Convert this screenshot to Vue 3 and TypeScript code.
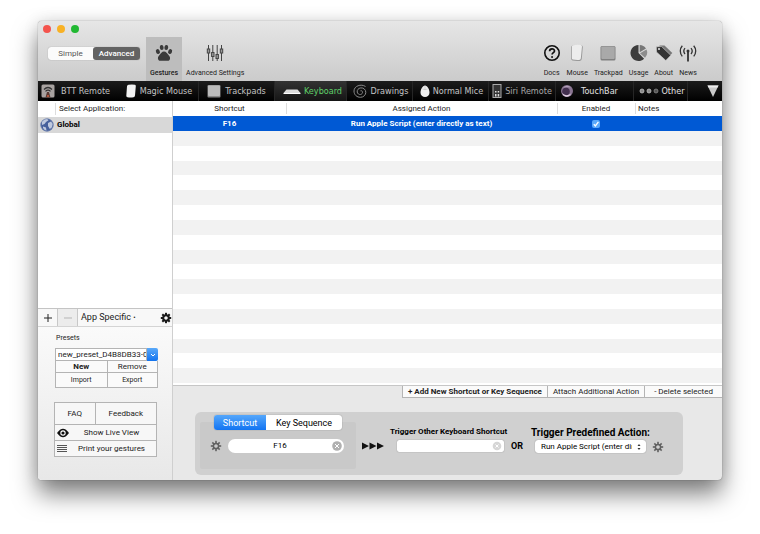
<script setup lang="ts">
import { ref } from 'vue'

interface Item {
  id: string
  label: string
}

const tools: Item[] = [
  { id: 'docs', label: 'Docs' },
  { id: 'mouse', label: 'Mouse' },
  { id: 'trackpad', label: 'Trackpad' },
  { id: 'usage', label: 'Usage' },
  { id: 'about', label: 'About' },
  { id: 'news', label: 'News' },
]

const tabs: Item[] = [
  { id: 'remote', label: 'BTT Remote' },
  { id: 'magic', label: 'Magic Mouse' },
  { id: 'trackpads', label: 'Trackpads' },
  { id: 'keyboard', label: 'Keyboard' },
  { id: 'drawings', label: 'Drawings' },
  { id: 'mice', label: 'Normal Mice' },
  { id: 'siri', label: 'Siri Remote' },
  { id: 'touchbar', label: 'TouchBar' },
  { id: 'other', label: 'Other' },
]

const activeTab = ref('keyboard')
const enabled = ref(true)
const preset = ref('new_preset_D4B8DB33-0A41')
const shortcut = ref('F16')
const otherShortcut = ref('')
const emptyRows = 17
const teeth = [0, 45, 90, 135, 180, 225, 270, 315]
</script>

<template>
  <div class="page">
    <main class="window">
      <header class="toolbar">
        <div class="lights">
          <button class="light red" aria-label="Close"></button>
          <button class="light amber" aria-label="Minimize"></button>
          <button class="light green" aria-label="Zoom"></button>
        </div>
        <div class="tools">
          <div class="mode">
            <button class="simple">Simple</button>
            <button class="advanced">Advanced</button>
          </div>
          <button class="tool wide chosen">
            <svg class="glyph" viewBox="0 0 18 18" fill="#3a3a3a">
              <ellipse cx="2.9" cy="7.6" rx="1.9" ry="2.5" transform="rotate(-25 2.9 7.6)" />
              <ellipse cx="6.7" cy="3.5" rx="1.9" ry="2.6" transform="rotate(-8 6.7 3.5)" />
              <ellipse cx="11.3" cy="3.5" rx="1.9" ry="2.6" transform="rotate(8 11.3 3.5)" />
              <ellipse cx="15.1" cy="7.6" rx="1.9" ry="2.5" transform="rotate(25 15.1 7.6)" />
              <path d="M9 7.6c2.2 0 3.1 2 4.5 3.5 1.600 1.700 1.900 3 1.300 4.300-.8 1.700-2.700 1.600-5.800 1.300-3.100.3-5 .4-5.800-1.300-.6-1.300-.3-2.600 1.300-4.300C5.900 9.600 6.800 7.600 9 7.600z" />
            </svg>
            <span>Gestures</span>
          </button>
          <button class="tool wide">
            <svg class="glyph" viewBox="0 0 18 18" fill="none" stroke="#444" stroke-width="1">
              <path d="M2.500 1v16M6.800 1v16M11.200 1v16M15.500 1v16" />
              <g fill="#999">
                <rect x="1.300" y="5" width="2.400" height="4" />
                <rect x="5.600" y="8.500" width="2.400" height="4" />
                <rect x="10" y="10.500" width="2.400" height="4" />
                <rect x="14.300" y="5" width="2.400" height="4" />
              </g>
            </svg>
            <span>Advanced Settings</span>
          </button>
          <nav class="right-tools" aria-label="Tools">
            <button v-for="t in tools" :key="t.id" class="tool">
              <svg v-if="t.id === 'docs'" class="glyph" viewBox="0 0 18 18" fill="none" stroke="#111">
                <circle cx="9" cy="9" r="7.200" stroke-width="1.600" />
                <path d="M6.600 7.200c0-3.200 4.900-3.100 4.900-.3 0 1.800-2.400 1.800-2.400 3.700" stroke-width="1.700" />
                <circle cx="9.100" cy="13" r=".6" fill="#111" />
              </svg>
              <svg v-else-if="t.id === 'mouse'" class="glyph" viewBox="0 0 18 18">
                <path d="M4.500 1.500q5-1 9-.3 1.400.3 1.300 2l-1 11.500q-.2 2-2 2.200-4 .4-7.300-.3-1.500-.4-1.300-2L3.300 3Q3.400 1.700 4.500 1.500z" fill="#999" />
                <path d="M4.800 1.200q4-.8 8-.2 1.300.3 1.200 1.600l-1.200 11.800q-.2 1.300-1.700 1.500-3.300.2-6.300-.4-1-.2-.9-1.500L4 2.500q0-1.100.8-1.300z" fill="#ededed" />
              </svg>
              <svg v-else-if="t.id === 'trackpad'" class="glyph" viewBox="0 0 18 18">
                <rect x="1.500" y="2" width="15" height="14.500" rx="1.500" fill="#808080" />
                <rect x="2.300" y="2.500" width="13.400" height="12.500" rx="1" fill="#a9a9a9" />
              </svg>
              <svg v-else-if="t.id === 'usage'" class="glyph" viewBox="0 0 18 18">
                <path d="M8.500 9V1a8 8 0 1 0 5.600 13.700z" fill="#3d3d3d" />
                <path d="M9.700 8.300V1a7.500 7.500 0 0 1 6.300 3.500z" fill="#777" />
                <path d="M10 9.200l6.500-3.700a7.500 7.500 0 0 1-1.500 8.300z" fill="#8d8d8d" />
              </svg>
              <svg v-else-if="t.id === 'about'" class="glyph" viewBox="0 0 18 18">
                <path d="M4.500 1.500h5L17.300 9l-4.700 5-8-7.500z" fill="#777" />
                <path d="M1.300 2.800l5.300-.3 9.200 8.800-5 5.200L1.500 8z" fill="#333" stroke="#d8d8d8" stroke-width=".6" />
                <circle cx="4" cy="5" r="1.100" fill="#ddd" />
              </svg>
              <svg v-else class="glyph" viewBox="0 0 18 18" fill="none" stroke="#333" stroke-width="1.300">
                <path d="M9 8v9.500" stroke-width="1.800" />
                <circle cx="9" cy="7" r="1.500" fill="#333" stroke="none" />
                <path d="M6 4.200a4.500 4.500 0 0 0 0 5.800M12 4.200a4.500 4.500 0 0 1 0 5.800M3.300 1.800a8 8 0 0 0 0 10.600M14.700 1.800a8 8 0 0 1 0 10.600" />
              </svg>
              <span>{{ t.label }}</span>
            </button>
          </nav>
        </div>
      </header>

      <nav class="tabs" aria-label="Devices">
        <button
          v-for="t in tabs"
          :key="t.id"
          class="tab"
          :class="[t.id, { active: activeTab === t.id }]"
          @click="activeTab = t.id"
        >
          <svg v-if="t.id === 'remote'" class="tab-icon" viewBox="0 0 14 14">
            <rect x=".5" y=".5" width="13" height="13" rx="1.500" fill="#a8a2a0" />
            <path d="M3 5.500q4-4 8 0M4.500 7.300q2.500-2.500 5 0" fill="none" stroke="#333" stroke-width="1.200" />
            <path d="M6 8h2l1.500 5.500h-5z" fill="#5a3a33" />
            <circle cx="7" cy="12" r="1" fill="#d06040" />
          </svg>
          <svg v-else-if="t.id === 'magic'" class="tab-icon narrow" viewBox="0 0 10 14">
            <path d="M2.500.8Q6 0 9 .8q.9.3.8 1.500L9 11.500Q8.800 13 7.500 13.200q-3 .5-6 0Q.2 13 .3 11.800L1 2.200Q1.200 1 2.500.8z" fill="#f2f2f2" />
          </svg>
          <svg v-else-if="t.id === 'trackpads'" class="tab-icon" viewBox="0 0 14 14">
            <rect x=".5" y="1" width="13" height="12.500" rx="1" fill="#888" />
            <rect x="1" y="1.500" width="12" height="10.500" rx="1" fill="#bbb" />
          </svg>
          <svg v-else-if="t.id === 'keyboard'" class="tab-icon broad" viewBox="0 0 18 14">
            <path d="M3.500 5.500h11L17.500 9H.5z" fill="#ddd" />
            <path d="M.5 9h17v1H.5z" fill="#fff" />
          </svg>
          <svg v-else-if="t.id === 'drawings'" class="tab-icon" viewBox="0 0 14 14" fill="none" stroke="#8a8a8a" stroke-width="1">
            <path d="M12.500 2.500C8-.5 1 2 1 7c0 4 3 6.300 6.500 6.300 3.200 0 5.300-2.500 5.300-5 0-2.800-2.500-4.700-5-4.400C5.300 4.200 4 6 4.200 8c.2 1.700 1.800 2.700 3.300 2.500 1.400-.2 2.300-1.500 2-2.700-.3-.9-1.200-1.300-2-1" />
          </svg>
          <svg v-else-if="t.id === 'mice'" class="tab-icon narrow" viewBox="0 0 10 14">
            <path d="M5 1.500c2.500 0 4.500 4 4.500 7.300 0 2.700-2 4.200-4.500 4.200S.5 11.500.5 8.800C.5 5.500 2.500 1.500 5 1.500z" fill="#efefef" />
            <path d="M2.500 5q2.500 1.300 5 0M5 2v3.500" stroke="#bbb" stroke-width=".6" fill="none" />
          </svg>
          <svg v-else-if="t.id === 'siri'" class="tab-icon narrow" viewBox="0 0 10 14">
            <rect x="1" y=".5" width="8" height="13" fill="#333" stroke="#aaa" stroke-width="1" />
            <path d="M3 7h1.500v1.500H3zM5.700 7h1.500v1.500H5.700zM3 10h1.500v2.500H3zM5.700 10h1.500v2.500H5.700z" fill="#ddd" />
          </svg>
          <svg v-else-if="t.id === 'touchbar'" class="tab-icon" viewBox="0 0 14 14">
            <circle cx="7" cy="7" r="6" fill="#8a7592" />
            <circle cx="6" cy="7.500" r="3.800" fill="#43304f" />
            <path d="M2 9q4 4 9 .5-1.500 3.500-4.500 3.300Q3.500 12.500 2 9z" fill="#e0cfe2" />
            <path d="M3 3.500Q7 0 11 3.500 7 2.500 3 3.500z" fill="#b3a0ba" />
          </svg>
          <svg v-else class="tab-icon dots" viewBox="0 0 20 14" fill="#8a8a8a" stroke="#c4c4c4" stroke-width=".8">
            <circle cx="3" cy="7" r="2" /><circle cx="10" cy="7" r="2" /><circle cx="17" cy="7" r="2" fill="#555" stroke="#888" />
          </svg>
          <span>{{ t.label }}</span>
        </button>
        <button class="tab more" aria-label="More tabs">
          <svg class="tab-icon" viewBox="0 0 14 14"><path d="M1.500 1.500h11L7 13z" fill="#c9c9c9" /><path d="M1.500 1.500h11l-1 2h-9z" fill="#eee" /></svg>
        </button>
      </nav>

      <div class="body">
        <aside class="sidebar">
          <div class="apps-head"><span>Select Application:</span></div>
          <ul class="apps">
            <li>
              <svg class="globe" viewBox="0 0 14 14">
                <circle cx="7" cy="7" r="6.500" fill="#46609c" />
                <path d="M2 3.500q2-2.500 5-2.700l1.500 1.500L6 4 4.500 6 2 7zM8 5l3-1.500L12.800 6l-1 3.500-2 1.500L8 8zM3 8.500l3 1 .5 3.200Q4 12 3 10z" fill="#bfc9de" />
                <circle cx="7" cy="7" r="6.200" fill="none" stroke="#8795b8" stroke-width=".6" />
              </svg>
              <strong>Global</strong>
            </li>
          </ul>
          <div class="app-bar">
            <button class="cell" aria-label="Add application">
              <svg class="sign" viewBox="0 0 8 8" stroke="#222" stroke-width="1"><path d="M4 0v8M0 4h8" /></svg>
            </button>
            <button class="cell off" aria-label="Remove application" disabled>
              <svg class="sign" viewBox="0 0 8 8" stroke="#b5b5b5" stroke-width="1"><path d="M0 4h8" /></svg>
            </button>
            <button class="specific">App Specific <small>•</small></button>
            <button class="gear-button" aria-label="Application settings">
              <svg class="gear dark" viewBox="0 0 12 12">
                <rect v-for="a in teeth" :key="a" x="5" y=".8" width="2" height="3" :transform="`rotate(${a} 6 6)`" />
                <circle class="ring" cx="6" cy="6" r="2.800" />
              </svg>
            </button>
          </div>
          <div class="side-bottom">
            <label for="preset">Presets</label>
            <div class="presets">
              <div class="combo">
                <input id="preset" v-model="preset" type="text" />
                <button class="drop" aria-label="Choose preset">
                  <svg class="chevron" viewBox="0 0 6 6" fill="none" stroke="#fff" stroke-width="1"><path d="M1 2l2 2 2-2" /></svg>
                </button>
              </div>
              <div class="grid-two short"><button class="bold">New</button><button>Remove</button></div>
              <div class="grid-two tall"><button>Import</button><button>Export</button></div>
            </div>
            <div class="help">
              <div class="faq-row"><button>FAQ</button><button>Feedback</button></div>
              <button class="line-button">
                <svg class="line-icon" viewBox="0 0 12 10">
                  <path d="M0 5q6-8.500 12 0-6 8.500-12 0z" fill="#111" />
                  <circle cx="6" cy="5" r="2.700" fill="#fff" /><circle cx="6" cy="5" r="1.600" fill="#111" />
                </svg>
                <span>Show Live View</span>
              </button>
              <button class="line-button">
                <svg class="line-icon" viewBox="0 0 12 10" stroke="#555" stroke-width="1"><path d="M0 1.500h10M0 3.500h10M0 5.500h10M0 7.500h10" /></svg>
                <span>Print your gestures</span>
              </button>
            </div>
          </div>
        </aside>

        <section class="content">
          <table>
            <colgroup><col class="c-key" /><col /><col class="c-on" /><col class="c-notes" /></colgroup>
            <thead>
              <tr><th>Shortcut</th><th>Assigned Action</th><th>Enabled</th><th class="notes">Notes</th></tr>
            </thead>
            <tbody>
              <tr>
                <td>F16</td>
                <td>Run Apple Script (enter directly as text)</td>
                <td>
                  <span class="check">
                    <input v-model="enabled" type="checkbox" aria-label="Enabled" />
                    <svg v-if="enabled" class="tick" viewBox="0 0 8 8" fill="none" stroke="#fff" stroke-width="1.300"><path d="M1.800 4.200l1.600 1.800 3-4.200" /></svg>
                  </span>
                </td>
                <td></td>
              </tr>
            </tbody>
          </table>
          <div class="stripes" aria-hidden="true"><div v-for="n in emptyRows" :key="n"></div></div>

          <div class="actions">
            <button class="add bold">+ Add New Shortcut or Key Sequence</button>
            <button class="attach">Attach Additional Action</button>
            <button class="delete">- Delete selected</button>
          </div>

          <div class="panel">
            <div class="trigger">
              <div class="segments">
                <button class="on">Shortcut</button>
                <button>Key Sequence</button>
              </div>
              <div class="trigger-box">
                <button class="gear-button" aria-label="Shortcut settings">
                  <svg class="gear" viewBox="0 0 12 12">
                    <rect v-for="a in teeth" :key="a" x="5.200" y=".8" width="1.600" height="3" :transform="`rotate(${a} 6 6)`" />
                    <circle class="ring" cx="6" cy="6" r="2.600" />
                  </svg>
                </button>
                <div class="field round">
                  <input v-model="shortcut" type="text" aria-label="Shortcut" />
                  <button class="clear" aria-label="Clear shortcut">
                    <svg class="cross" viewBox="0 0 10 10"><circle cx="5" cy="5" r="4.800" fill="#b0b0b0" /><path d="M3 3l4 4M7 3L3 7" stroke="#fff" stroke-width="1" /></svg>
                  </button>
                </div>
              </div>
            </div>
            <svg class="arrows" viewBox="0 0 22 14" fill="#111"><path d="M0 3.500L7 7 0 10.500zM7.500 3.500l7 3.500-7 3.500zM15 3.500L22 7l-7 3.500z" /></svg>
            <div class="other-key">
              <label for="other">Trigger Other Keyboard Shortcut</label>
              <div class="field square">
                <input id="other" v-model="otherShortcut" type="text" />
                <button class="clear" aria-label="Clear other shortcut">
                  <svg class="cross" viewBox="0 0 10 10"><circle cx="5" cy="5" r="4.300" fill="#d6d6d6" /><path d="M3.500 3.500l3 3M6.500 3.500l-3 3" stroke="#fff" stroke-width="1" /></svg>
                </button>
              </div>
            </div>
            <strong class="or">OR</strong>
            <div class="predefined">
              <label for="action">Trigger Predefined Action:</label>
              <div class="select">
                <select id="action"><option>Run Apple Script (enter directly as text)</option></select>
                <svg class="updown" viewBox="0 0 6 8" fill="#333"><path d="M3 1l1.500 2h-3zM3 7l1.500-2h-3z" /></svg>
              </div>
            </div>
            <button class="gear-button end" aria-label="Action settings">
              <svg class="gear" viewBox="0 0 12 12">
                <rect v-for="a in teeth" :key="a" x="5.200" y=".8" width="1.600" height="3" :transform="`rotate(${a} 6 6)`" />
                <circle class="ring" cx="6" cy="6" r="2.600" />
              </svg>
            </button>
          </div>
        </section>
      </div>
    </main>
  </div>
</template>

<style>
body {
  background: #fff;
}
</style>

<style scoped>
* {
  box-sizing: border-box;
}
button,
input,
select {
  margin: 0;
  padding: 0;
  border: 0;
  background: none;
  color: inherit;
  font: inherit;
}
svg {
  display: block;
  flex: none;
}
.page {
  display: flex;
  min-height: 100vh;
  padding: 21px 38px 54px;
  color: #222;
  font: 8px/10px Roboto, 'Liberation Sans', sans-serif;
}
.window {
  display: flex;
  flex: 1;
  flex-direction: column;
  min-width: 0;
  overflow: hidden;
  border-radius: 4px;
  background: #e8e8e8;
  box-shadow: 0 0 1px rgba(0, 0, 0, 0.6), 0 14px 24px rgba(0, 0, 0, 0.5), 0 0 16px rgba(0, 0, 0, 0.1);
}
.bold {
  font-weight: 700;
}

/* Title bar and toolbar */
.toolbar {
  display: flex;
  flex-direction: column;
  height: 60px;
  background: linear-gradient(#e6e6e6, #cbcbcb);
}
.lights {
  display: flex;
  gap: 6px;
  height: 16px;
  padding: 4px 5px;
}
.light {
  width: 8px;
  height: 8px;
  border-radius: 50%;
}
.red {
  background: #f4544d;
}
.amber {
  background: #f8b124;
}
.green {
  background: #21b832;
}
.tools {
  display: flex;
  height: 44px;
  padding: 0 25px 0 10px;
}
.mode {
  display: flex;
  height: 13px;
  margin: 10px 6px 0 0;
  border-radius: 3px;
  background: #fbfbfb;
  box-shadow: 0 0 1px rgba(0, 0, 0, 0.4);
}
.simple {
  width: 45px;
  color: #555;
}
.advanced {
  width: 47px;
  border-radius: 3px;
  background: #636363;
  color: #fff;
  font-weight: 500;
}
.tool {
  display: flex;
  flex-direction: column;
  align-items: center;
  gap: 6px;
  padding-top: 7px;
  font-size: 7px;
  white-space: nowrap;
}
.wide {
  padding-right: 4px;
  padding-left: 4px;
}
.chosen {
  background: #bdbdbd;
  font-weight: 500;
}
.glyph {
  width: 18px;
  height: 18px;
}
.right-tools {
  display: flex;
  gap: 6px;
  margin-left: auto;
}

/* Device tabs */
.tabs {
  display: grid;
  grid-template-columns: 80fr 81fr 76fr 72fr 66fr 76fr 67fr 78fr 54fr 34fr;
  height: 20px;
  background: linear-gradient(#1c1c1c, #000);
  color: #c4c4c4;
  font: 9px/12px 'DejaVu Sans Condensed', 'DejaVu Sans', sans-serif;
}
.tab {
  display: flex;
  align-items: center;
  justify-content: center;
  gap: 4px;
  min-width: 0;
  border-right: 1px solid #262626;
  white-space: nowrap;
}
.tab.remote {
  justify-content: flex-start;
  gap: 6px;
  padding-left: 3px;
  border-right: 0;
}
.tab.magic,
.tab.drawings,
.tab.mice,
.tab.other {
  padding-left: 2px;
}
.tab.keyboard {
  padding-left: 4px;
}
.tab.keyboard,
.tab.mice,
.tab.siri,
.tab.other {
  gap: 3px;
}
.tab.active {
  background: linear-gradient(#333, #151515);
  color: #5fd068;
}
.tab.siri {
  color: #a8a8a8;
}
.tab.touchbar {
  justify-content: flex-start;
  gap: 7px;
  padding-left: 4px;
}
.tab.touchbar,
.tab.other {
  color: #e2e2e2;
}
.tab.more {
  justify-content: flex-end;
  padding-right: 2px;
  border-right: 0;
}
.tab-icon {
  width: 14px;
  height: 14px;
}
.tab-icon.narrow {
  width: 10px;
}
.tab-icon.broad {
  width: 18px;
}
.tab-icon.dots {
  width: 20px;
}

.body {
  display: flex;
  flex: 1;
  min-height: 0;
}

/* Sidebar */
.sidebar {
  display: flex;
  flex: none;
  flex-direction: column;
  width: 135px;
  border-right: 1px solid #cfcfcf;
  background: #fff;
}
.apps-head {
  display: flex;
  height: 16px;
  padding: 2px 0 2px 17px;
}
.apps-head span {
  padding: 1px 0 0 3px;
  border-left: 1px solid #ddd;
}
.apps {
  flex: 1;
  margin: 0;
  padding: 0;
  list-style: none;
}
.apps li {
  display: flex;
  align-items: center;
  gap: 3px;
  height: 16px;
  padding-left: 2px;
  background: #d8d8d8;
  color: #000;
}
.globe {
  width: 14px;
  height: 14px;
}
.app-bar {
  display: flex;
  height: 19px;
  border-top: 1px solid #c4c4c4;
  border-bottom: 1px solid #d4d4d4;
  background: #f8f8f8;
}
.cell {
  display: flex;
  align-items: center;
  justify-content: center;
  width: 20px;
  border-right: 1px solid #c8c8c8;
}
.off {
  background: #ececec;
}
.sign {
  width: 8px;
  height: 8px;
}
.specific {
  padding-left: 3px;
  font-size: 9px;
}
.specific small {
  font-size: 7px;
}
.gear-button {
  display: flex;
  align-items: center;
}
.app-bar .gear-button {
  margin-left: auto;
}
.gear {
  width: 12px;
  height: 12px;
  fill: #606060;
}
.gear.dark {
  fill: #1a1a1a;
}
.ring {
  fill: none;
  stroke: #606060;
  stroke-width: 1.5px;
}
.dark .ring {
  stroke: #1a1a1a;
  stroke-width: 2px;
}
.side-bottom {
  height: 153px;
  padding: 6px 14px 0 17px;
  background: linear-gradient(#fafafa, #e8e8e8);
}
.side-bottom label {
  display: block;
  padding-left: 1px;
  font-size: 7px;
}
.presets {
  margin-top: 5px;
}
.combo {
  display: flex;
  height: 13px;
}
.combo input {
  flex: 1;
  min-width: 0;
  padding-left: 2px;
  border: 1px solid #b4b4b4;
  background: #fff;
}
.drop {
  display: flex;
  align-items: center;
  justify-content: center;
  width: 11px;
  border-radius: 0 2px 2px 0;
  background: linear-gradient(#5aa9f9, #1273ee);
}
.chevron {
  width: 6px;
  height: 6px;
}
.grid-two {
  display: grid;
  grid-template-columns: 1fr 1fr;
  border: 1px solid #b4b4b4;
  border-top: 0;
  background: #fafafa;
}
.grid-two button + button,
.faq-row button + button {
  border-left: 1px solid #b4b4b4;
}
.short {
  height: 12px;
}
.tall {
  height: 15px;
  font-size: 7px;
}
.help {
  margin: 14px 1px 0 -1px;
  border: 1px solid #b4b4b4;
  background: #f7f7f7;
}
.faq-row {
  display: grid;
  grid-template-columns: 40fr 62fr;
  height: 21px;
}
.line-button {
  display: flex;
  align-items: center;
  width: 100%;
  height: 16px;
  padding: 0 2px;
  border-top: 1px solid #b4b4b4;
}
.line-button span {
  flex: 1;
}
.line-icon {
  width: 12px;
  height: 10px;
}

/* Shortcut table */
.content {
  display: flex;
  flex: 1;
  flex-direction: column;
  min-width: 0;
}
table {
  width: 100%;
  border-collapse: collapse;
  background: #fff;
  table-layout: fixed;
}
.c-key {
  width: 113px;
}
.c-on {
  width: 78px;
}
.c-notes {
  width: 87px;
}
tr {
  height: 15px;
}
th,
td {
  padding: 0;
  font-weight: 400;
  line-height: 10px;
  text-align: center;
  vertical-align: middle;
}
th + th {
  background: linear-gradient(#ddd, #ddd) left center / 1px 11px no-repeat;
}
th.notes {
  padding-left: 3px;
  text-align: left;
}
td {
  background: #0059d4;
  color: #fff;
  font-weight: 700;
}
.check {
  display: grid;
  width: 8px;
  margin: 0 auto;
}
.check input,
.tick {
  grid-area: 1 / 1;
  width: 8px;
  height: 8px;
}
.check input {
  appearance: none;
  border-radius: 2px;
  background: #5aa9fb;
}
.tick {
  z-index: 1;
  pointer-events: none;
}
.stripes {
  display: flex;
  flex: 1;
  flex-direction: column;
  padding-bottom: 2px;
  border-bottom: 1px solid #c6c6c6;
  background: #fff;
}
.stripes div {
  flex: 1;
}
.stripes div:nth-child(odd) {
  background: #f2f2f2;
}
.actions {
  display: flex;
  justify-content: flex-end;
  height: 12px;
}
.actions button {
  border: 1px solid #b4b4b4;
  border-width: 0 0 1px 1px;
  padding: 0 5px;
  background: #fafafa;
  white-space: nowrap;
}
.actions .delete {
  padding: 0 9px;
}

/* Action editor */
.panel {
  display: flex;
  align-items: flex-end;
  height: 63px;
  margin: 14px 39px 5px 22px;
  padding: 3px 5px 6px;
  border-radius: 6px;
  background: #d0d0d0;
  color: #000;
}
.trigger {
  flex: none;
  width: 156px;
}
.segments {
  position: relative;
  display: flex;
  height: 15px;
  margin: 0 14px;
  overflow: hidden;
  border-radius: 3px;
  background: #fff;
  box-shadow: 0 0 1px rgba(0, 0, 0, 0.5);
  font-size: 9px;
}
.segments button {
  flex: 76;
  white-space: nowrap;
}
.segments .on {
  flex: 52;
  background: linear-gradient(#55a7fb, #1274f2);
  color: #fff;
}
.trigger-box {
  display: flex;
  align-items: center;
  gap: 6px;
  height: 47px;
  margin-top: -8px;
  padding: 1px 12px 0 10px;
  border-radius: 2px;
  background: #c9c9c9;
}
.field {
  display: flex;
  align-items: center;
  min-width: 0;
  background: #fff;
}
.field input {
  flex: 1;
  min-width: 0;
  outline: 0;
}
.round {
  flex: 1;
  height: 14px;
  padding-right: 2px;
  border-radius: 7px;
}
.round input {
  text-align: center;
}
.cross {
  width: 10px;
  height: 10px;
}
.square {
  height: 12px;
  margin-left: 7px;
  padding-right: 2px;
  border-radius: 2px;
  box-shadow: 0 0 1px rgba(0, 0, 0, 0.5);
}
.arrows {
  width: 22px;
  height: 14px;
  margin: 0 6px 16px;
}
.other-key {
  width: 114px;
  margin-bottom: 17px;
}
.panel label {
  display: block;
  margin-bottom: 3px;
  font-weight: 700;
  white-space: nowrap;
}
.or {
  margin: 0 8px 18px 7px;
  font-size: 9px;
}
.predefined {
  width: 115px;
  margin-bottom: 16px;
}
.panel .predefined label {
  margin-bottom: 2px;
  font-size: 10px;
}
.select {
  display: flex;
  align-items: center;
  height: 13px;
  margin-left: 4px;
  padding: 0 4px 0 6px;
  border-radius: 3px;
  background: #fff;
  box-shadow: 0 0 1px rgba(0, 0, 0, 0.5);
}
.select select {
  flex: 1;
  min-width: 0;
  overflow: hidden;
  appearance: none;
  outline: 0;
}
.updown {
  width: 6px;
  height: 8px;
  margin-left: 4px;
}
.end {
  margin: 0 0 16px 6px;
}
</style>
